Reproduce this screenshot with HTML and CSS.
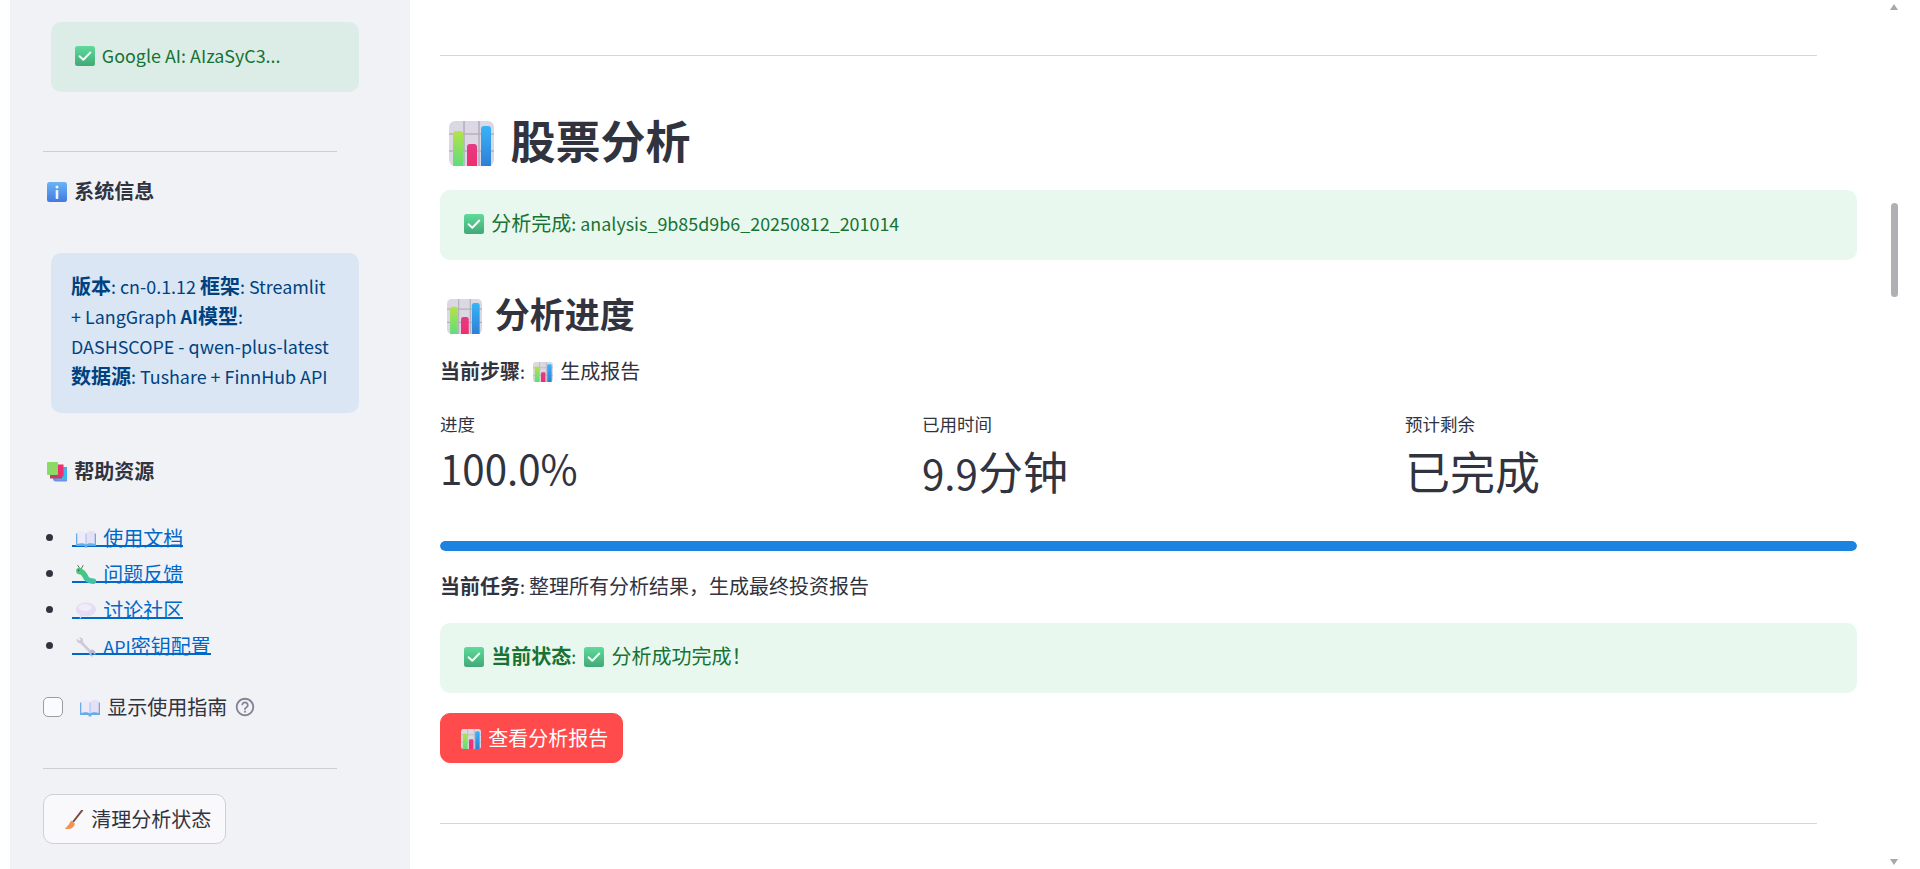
FILE: index.html
```html
<!DOCTYPE html>
<html lang="zh-CN">
<head>
<meta charset="utf-8">
<title>股票分析</title>
<link rel="stylesheet" href="styles.css">
</head>
<body>
<svg class="defs" xmlns="http://www.w3.org/2000/svg" aria-hidden="true">
  <defs>
    <linearGradient id="gBarG" x1="0" y1="0" x2="0" y2="1"><stop offset="0" stop-color="#b5e24a"/><stop offset="1" stop-color="#5fdc7c"/></linearGradient>
    <linearGradient id="gBarP" x1="0" y1="0" x2="0" y2="1"><stop offset="0" stop-color="#e63a86"/><stop offset="1" stop-color="#ee2f6e"/></linearGradient>
    <linearGradient id="gBarB" x1="0" y1="0" x2="0" y2="1"><stop offset="0" stop-color="#36b4f8"/><stop offset="1" stop-color="#2f7fd6"/></linearGradient>
    <linearGradient id="gChk" x1="0" y1="0" x2="0" y2="1"><stop offset="0" stop-color="#5fdb9b"/><stop offset="1" stop-color="#42a877"/></linearGradient>
    <linearGradient id="gInfo" x1="0" y1="0" x2="0" y2="1"><stop offset="0" stop-color="#6cb4f5"/><stop offset="1" stop-color="#4179e2"/></linearGradient>
    <linearGradient id="gBug" x1="0" y1="0" x2="1" y2="1"><stop offset="0" stop-color="#45c87e"/><stop offset="1" stop-color="#45c0a8"/></linearGradient>
    <symbol id="i-chart" viewBox="0 0 45 45">
      <rect width="45" height="45" rx="6" fill="#dcd8e3"/>
      <path d="M15 0v45M30 0v45M0 13h45M0 30h45" stroke="#b5b0bd" stroke-width="1.6" fill="none"/>
      <path d="M4 13a3 3 0 0 1 3-3h4a3 3 0 0 1 3 3v32H4z" fill="url(#gBarG)"/>
      <path d="M18 26a3 3 0 0 1 3-3h4a3 3 0 0 1 3 3v19H18z" fill="url(#gBarP)"/>
      <path d="M32 8a3 3 0 0 1 3-3h4a3 3 0 0 1 3 3v37H32z" fill="url(#gBarB)"/>
    </symbol>
    <symbol id="i-check" viewBox="0 0 20 20">
      <rect width="20" height="20" rx="2.5" fill="url(#gChk)"/>
      <path d="M4.6 10.2l3.7 3.5 7-7.2" fill="none" stroke="#f2fbf6" stroke-width="2" stroke-linecap="round" stroke-linejoin="round"/>
    </symbol>
    <symbol id="i-info" viewBox="0 0 20 20">
      <rect width="20" height="20" rx="2.5" fill="url(#gInfo)"/>
      <circle cx="10" cy="5" r="1.5" fill="#eef5fd"/>
      <rect x="8.7" y="8" width="2.6" height="9" rx=".8" fill="#eef5fd"/>
    </symbol>
    <symbol id="i-books" viewBox="0 0 20 20">
      <path d="M6 5h14v13.500a1 1 0 0 1-1 1H9a3 3 0 0 1-3-3z" fill="#6f8fe8"/>
      <rect x="9.500" y="6.500" width="10.500" height="11.500" fill="#3fb6ee"/>
      <path d="M3 3h12v13.500H3z" fill="#b8406e"/>
      <rect x="10" y="2.500" width="6.500" height="12" fill="#ee2f6e"/>
      <rect y="0" width="11" height="13" rx="1" fill="#8bd966"/>
    </symbol>
    <symbol id="i-book" viewBox="0 0 20 20">
      <path d="M0 4.500h20V17h-8.600v1.600H8.600V17H0z" fill="#67abe8"/>
      <path d="M1.300 2.600C4.200 1.600 8 1.800 9.700 3.800V15.600C8 14 4.200 13.900 1.300 15z" fill="#efeaf9"/>
      <path d="M18.700 2.600C15.800 1.600 12 1.800 10.300 3.800V15.600C12 14 15.800 13.900 18.700 15z" fill="#e6e0f4"/>
    </symbol>
    <symbol id="i-bug" viewBox="0 0 20 20">
      <path d="M1.500 0l2 3M7 .5L5.500 3.500" stroke="#4a6b52" stroke-width=".9" fill="none" stroke-linecap="round"/>
      <path d="M3.700 6.400C8 6.400 8.500 10.500 10.500 13.500 11.500 15 15 16 17.500 16.300" stroke="url(#gBug)" stroke-width="5.500" fill="none" stroke-linecap="round"/>
      <circle cx="3.500" cy="6" r="3.300" fill="#49c978"/>
      <circle cx="2.600" cy="5.300" r=".8" fill="#26503a"/>
    </symbol>
    <symbol id="i-chat" viewBox="0 0 20 20">
      <path d="M10 1.500c5.500 0 10 2.900 10 7s-4.500 7-10 7c-1.100 0-2.200-.1-3.200-.4L3.800 18l.2-3.900C1.500 12.900 0 10.800 0 8.500c0-4.100 4.500-7 10-7z" fill="#e5ddf3"/>
      <ellipse cx="9" cy="6.500" rx="6.500" ry="3.500" fill="#f1ecf9"/>
    </symbol>
    <symbol id="i-wrench" viewBox="0 0 20 20">
      <path d="M3.500 3.500L15.500 16" stroke="#cfc9dc" stroke-width="2.600" fill="none"/>
      <path d="M1 1.500a3.600 3.600 0 0 0 3.700 5L7 4.500A3.600 3.600 0 0 0 3 .2L5 3 3.500 4.200z" fill="#cfc9dc"/>
      <path d="M19 18a3.600 3.600 0 0 0-3.500-5.400L13.300 15a3.600 3.600 0 0 0 4 4.500L15.200 17l1.500-1.500z" fill="#bdb6cf"/>
    </symbol>
    <symbol id="i-broom" viewBox="0 0 20 20">
      <path d="M18.500 0L9 12" stroke="#7a4a3c" stroke-width="2" fill="none"/>
      <path d="M7 10.500l4 3.300c-1 3-3 5-6 5.200-1.800.1-3.500 0-4.300-.3C3 17 5.500 14 7 10.500z" fill="#f39255"/>
    </symbol>
  </defs>
</svg>

<div class="app">
  <div class="edge"></div>
  <aside class="sidebar">
    <div class="alert alert-sidebar-ok"><svg class="emo"><use href="#i-check"/></svg><span class="lat"> Google AI: AIzaSyC3...</span></div>
    <hr class="rule rule-side rule-a">
    <h3 class="side-head side-head-a"><svg class="emo"><use href="#i-info"/></svg> 系统信息</h3>
    <div class="alert alert-sidebar-info"><strong>版本</strong><span class="lat">: cn-0.1.12 </span><strong>框架</strong><span class="lat">: Streamlit + LangGraph </span><strong><span class="lat">AI</span>模型</strong><span class="lat">: DASHSCOPE - qwen-plus-latest </span><strong>数据源</strong><span class="lat">: Tushare + FinnHub API</span></div>
    <h3 class="side-head side-head-b"><svg class="emo"><use href="#i-books"/></svg> 帮助资源</h3>
    <ul class="links">
      <li><a href="#"><svg class="emo"><use href="#i-book"/></svg> 使用文档</a></li>
      <li><a href="#"><svg class="emo"><use href="#i-bug"/></svg> 问题反馈</a></li>
      <li><a href="#"><svg class="emo"><use href="#i-chat"/></svg> 讨论社区</a></li>
      <li><a href="#"><svg class="emo"><use href="#i-wrench"/></svg> <span class="lat">API</span>密钥配置</a></li>
    </ul>
    <label class="check-row">
      <input class="check" type="checkbox">
      <span class="check-label"><svg class="emo"><use href="#i-book"/></svg> 显示使用指南</span>
      <svg class="help" viewBox="0 0 24 24"><path fill="#808495" d="M11 18h2v-2h-2v2zm1-16C6.480 2 2 6.480 2 12s4.480 10 10 10 10-4.480 10-10S17.520 2 12 2zm0 18c-4.410 0-8-3.590-8-8s3.590-8 8-8 8 3.590 8 8-3.590 8-8 8zm0-14c-2.210 0-4 1.790-4 4h2c0-1.100.9-2 2-2s2 .9 2 2c0 2-3 1.750-3 5h2c0-2.250 3-2.500 3-5 0-2.210-1.790-4-4-4z"/></svg>
    </label>
    <hr class="rule rule-side rule-b">
    <button class="btn btn-plain" type="button"><svg class="emo"><use href="#i-broom"/></svg> 清理分析状态</button>
  </aside>

  <main class="main">
    <hr class="rule rule-main rule-top">
    <h1 class="title"><svg class="emo"><use href="#i-chart"/></svg> 股票分析</h1>
    <div class="alert alert-ok alert-first"><svg class="emo"><use href="#i-check"/></svg> 分析完成<span class="lat">: analysis_9b85d9b6_20250812_201014</span></div>
    <h2 class="subtitle"><svg class="emo"><use href="#i-chart"/></svg> 分析进度</h2>
    <p class="line line-step"><strong>当前步骤</strong><span class="lat">: </span><svg class="emo"><use href="#i-chart"/></svg> 生成报告</p>
    <div class="metrics">
      <div class="metric">
        <div class="metric-label">进度</div>
        <div class="metric-value"><span class="lat">100.0%</span></div>
      </div>
      <div class="metric">
        <div class="metric-label">已用时间</div>
        <div class="metric-value metric-value-cjk"><span class="lat">9.9</span>分钟</div>
      </div>
      <div class="metric">
        <div class="metric-label">预计剩余</div>
        <div class="metric-value metric-value-cjk">已完成</div>
      </div>
    </div>
    <div class="progress"><div class="progress-fill" style="width:100%"></div></div>
    <p class="line line-task"><strong>当前任务</strong><span class="lat">: </span>整理所有分析结果，生成最终投资报告</p>
    <div class="alert alert-ok alert-state"><svg class="emo"><use href="#i-check"/></svg> <strong>当前状态</strong><span class="lat">: </span><svg class="emo"><use href="#i-check"/></svg> 分析成功完成！</div>
    <button class="btn btn-primary" type="button"><svg class="emo"><use href="#i-chart"/></svg> 查看分析报告</button>
    <hr class="rule rule-main rule-bottom">
  </main>

  <div class="scrollbar">
    <span class="arrow arrow-up"></span>
    <span class="thumb"></span>
    <span class="arrow arrow-down"></span>
  </div>
</div>
</body>
</html>
```
FILE: styles.css
```css
html, body {
  margin: 0;
  height: 869px;
  overflow: hidden;
  background: #fff;
}

body {
  font-family: "Noto Sans CJK SC", "Noto Sans", sans-serif;
  font-size: 20px;
  line-height: 30px;
  color: #31333f;
}

.defs {
  display: block;
  width: 0;
  height: 0;
}

.app {
  display: flex;
  height: 869px;
}

.edge {
  width: 10px;
  flex: none;
}

.emo {
  display: inline-block;
  width: 1em;
  height: 1em;
  margin: 0 .14em 0 .2em;
  vertical-align: -.16em;
}

/* Latin runs: the CJK face's Latin glyphs are drawn about 11% larger */
.lat {
  font-size: .895em;
}

strong {
  font-weight: 700;
}

/* rules */
.rule {
  border: 0;
  height: 1px;
  margin: 0;
}

.rule-side {
  width: 294px;
  background: #cdced4;
}

.rule-a {
  margin-top: 59px;
}

.rule-b {
  margin-top: 46px;
}

.rule-main {
  background: #d6d6d9;
  margin-right: 40px;
}

.rule-top {
  margin-top: 55px;
}

.rule-bottom {
  margin-top: 60px;
}

/* sidebar */
.sidebar {
  width: 400px;
  flex: none;
  box-sizing: border-box;
  padding: 22px 51px 0 33px;
  background: #f0f2f6;
}

.alert {
  box-sizing: border-box;
  border-radius: 10px;
  padding: 18px 20px;
}

.alert-sidebar-ok {
  height: 70px;
  margin-left: 8px;
  background: #dcede7;
  color: #177233;
}

.alert-sidebar-info {
  height: 160px;
  margin: 47px 0 0 8px;
  background: #dbe6f4;
  color: #004280;
}

.side-head {
  margin: 0;
  font-size: 20px;
  line-height: 30px;
  font-weight: 700;
}

.side-head-a {
  margin-top: 24px;
}

.side-head-b {
  margin-top: 43px;
}

.links {
  list-style: none;
  margin: 33px 0 0;
  padding: 0 0 0 3px;
}

.links li {
  display: flex;
  height: 36px;
  line-height: 36px;
}

.links li::before {
  content: "";
  flex: none;
  width: 7px;
  height: 7px;
  margin: 15px 19px 0 0;
  border-radius: 50%;
  background: #31333f;
}

.links a {
  display: block;
  box-sizing: content-box;
  height: 26px;
  line-height: 38px;
  color: #0068c9;
  text-decoration: none;
  border-bottom: 2px solid #0068c9;
  white-space: nowrap;
}

.check-row {
  display: flex;
  align-items: center;
  height: 30px;
  margin-top: 29px;
}

.check {
  appearance: none;
  box-sizing: border-box;
  width: 20px;
  height: 20px;
  margin: 0 13px 0 0;
  background: #fafbfc;
  border: 1px solid #9a9ba3;
  border-radius: 5px;
}

.check-label {
  white-space: nowrap;
}

.help {
  width: 22px;
  height: 22px;
  margin-left: 7px;
}

.btn {
  display: block;
  box-sizing: border-box;
  width: 183px;
  height: 50px;
  padding: 0 16px;
  font: inherit;
  border-radius: 10px;
  text-align: left;
  white-space: nowrap;
}

.btn-plain {
  margin-top: 25px;
  background: #f9f9fb;
  border: 1px solid #cfd0d5;
  color: #31333f;
}

.btn-primary {
  margin-top: 20px;
  background: #ff4b4b;
  border: 1px solid #ff4b4b;
  color: #fff;
}

/* main */
.main {
  flex: 1;
  min-width: 0;
  box-sizing: border-box;
  padding: 0 33px 0 30px;
}

.title {
  display: block;
  margin: 58px 0 0;
  height: 56px;
  font-size: 45px;
  line-height: 52px;
  font-weight: 700;
}

.alert-ok {
  height: 70px;
  background: #e8f8ee;
  color: #177233;
}

.alert-first {
  margin-top: 20px;
}

.alert-state {
  margin-top: 22px;
}

.subtitle {
  margin: 34px 0 0;
  height: 44px;
  font-size: 35px;
  line-height: 38px;
  font-weight: 700;
}

.line {
  margin: 0;
  height: 30px;
}

.line-step {
  margin-top: 18px;
}

.line-task {
  margin-top: 20px;
}

.metrics {
  display: grid;
  grid-template-columns: 482px 483px 1fr;
  margin-top: 23px;
}

.metric-label {
  font-size: 17.500px;
  line-height: 29px;
}

.metric-value {
  box-sizing: border-box;
  height: 60px;
  font-size: 45px;
  line-height: 56px;
  font-weight: 400;
}

.metric-value-cjk {
  padding-top: 5px;
}

.progress {
  height: 10px;
  margin-top: 43px;
  border-radius: 5px;
  background: #f0f2f6;
  overflow: hidden;
}

.progress-fill {
  height: 100%;
  background: #1c83e1;
  border-radius: 5px;
}

/* page scrollbar */
.scrollbar {
  flex: none;
  display: flex;
  flex-direction: column;
  align-items: center;
  width: 8px;
  height: 869px;
  margin-right: 22px;
}

.arrow {
  flex: none;
  width: 0;
  height: 0;
  border-left: 4px solid transparent;
  border-right: 4px solid transparent;
}

.arrow-up {
  margin-top: 4px;
  border-bottom: 6px solid #a8a7ac;
}

.arrow-down {
  margin-top: auto;
  margin-bottom: 4px;
  border-top: 6px solid #a8a7ac;
}

.thumb {
  flex: none;
  width: 7px;
  height: 94px;
  margin-top: 193px;
  border-radius: 4px;
  background: #b0afb4;
}
```
